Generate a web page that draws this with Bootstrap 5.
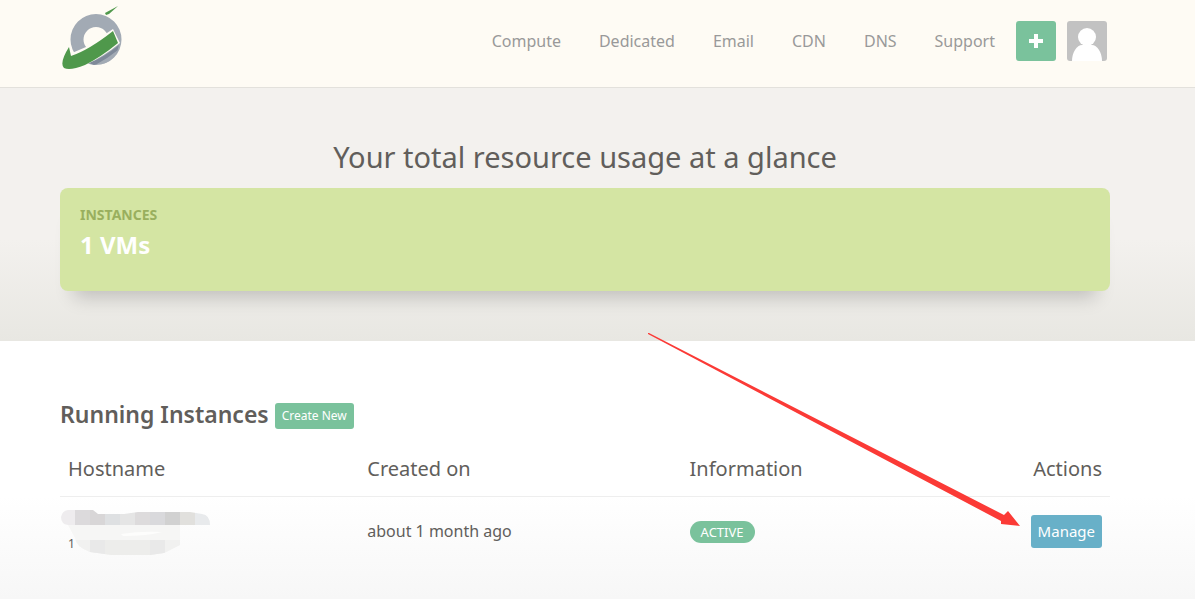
<!DOCTYPE html>
<html lang="en">
<head>
<meta charset="utf-8">
<meta name="viewport" content="width=device-width, initial-scale=1">
<title>Dashboard</title>
<link href="https://cdn.jsdelivr.net/npm/bootstrap@5.3.0/dist/css/bootstrap.min.css" rel="stylesheet">
<style>
body{font-family:"Noto Sans","Open Sans",sans-serif;font-size:16px;color:#615e5b;background:#fff;overflow-x:hidden}
.gutter{padding-left:60px;padding-right:85px}
.topbar{background:#fefbf4;border-bottom:1px solid #e3e1dc;min-height:88px;padding-top:0;padding-bottom:5px}
.topbar .nav-link{color:#999;padding:0 19px;line-height:24px}
.btn-mint{background:#7ac29c;color:#fff;border:0;border-radius:3px}
.btn-mint:hover{background:#68b48c;color:#fff}
.square{width:40px;height:40px}
.add{margin:0 11px 0 2px}
.avatar{border-radius:3px;overflow:hidden;margin-right:3px}
.hero{background:linear-gradient(#f3f1ee 60%,#e8e7e2);padding-top:49px;padding-bottom:50px}
.hero h1{font-size:29px;line-height:40px;margin-bottom:11px;font-weight:400}
.usage{background:#d4e5a3;border-radius:8px;padding:17px 20px;min-height:103px;box-shadow:0 20px 18px -14px rgba(0,0,0,.2)}
.usage-label{color:#99af5e;font-size:14px;line-height:20px;font-weight:700}
.usage-value{color:#fff;font-size:24px;line-height:40px;font-weight:700}
.instances{min-height:258px;padding-top:56px;background:linear-gradient(#fff 60%,#f7f7f7)}
.instances h2{font-size:23px;line-height:34px;font-weight:600}
.heading-row{gap:6px}
.create{font-size:12px;line-height:18px;padding:4px 7px;margin-top:4px}
.grid-table{--bs-table-bg:transparent;--bs-table-color:#615e5b;table-layout:fixed;margin-top:15px}
.grid-table th{font-size:20px;line-height:30px;font-weight:400;padding:8px 8px 12px;border-bottom:1px solid #eee}
.grid-table td{padding:8px;border:0;height:68px;vertical-align:middle}
.w-host{width:28.5%}.w-created{width:30.7%}.w-info{width:32.4%}
.state{background:#7ac29c;border-radius:11px;font-size:13px;line-height:14px;font-weight:400;padding:4px 11px;vertical-align:middle}
.manage{background:#68b0c8;color:#fff;border:0;border-radius:3px;font-size:15px;line-height:21px;padding:6px 7px}
.manage:hover{background:#559fb8;color:#fff}
.pointer{right:100%;bottom:20px;margin-right:10px;pointer-events:none}
.host{height:52px}
.host svg{left:-8px;top:0}
.host-ip{font-size:12px;line-height:16px;bottom:5px;left:0}
</style>
</head>
<body>
<header class="topbar gutter d-flex align-items-center justify-content-between">
  <a href="#" aria-label="Home">
    <svg class="d-block" width="64" height="82" viewBox="0 0 64 82" aria-hidden="true">
      <path fill="#a2aab4" fill-rule="evenodd" d="M36 14a25.500 25.500 0 1 1 0 51 25.500 25.500 0 1 1 0-51zm0 13a12.500 12.500 0 1 0 0 25 12.500 12.500 0 1 0 0-25z"/>
      <path fill="#7f8999" d="M29 63Q43 58 59 45L57 52Q47 62 34 65Z"/>
      <path fill="#a2aab4" d="M37 64Q48 58 58 50Q51 65 37 64Z"/>
      <path fill="#fefbf4" d="M8 45L11 46L12 53L26 47L53 29L60 43Q43 57 27 64L0 70Z"/>
      <path fill="#4f984b" d="M9 47L11 56Q29 50 53 31L58 43Q41 57 25 65Q10 71 4 68Q-1 63 9 47Z"/>
      <path fill="#4f984b" d="M45 13L58 6L49 14L46 15Z"/>
    </svg>
  </a>
  <nav class="d-flex align-items-center" aria-label="Main">
    <a class="nav-link" href="#">Compute</a><a class="nav-link" href="#">Dedicated</a><a class="nav-link" href="#">Email</a><a class="nav-link" href="#">CDN</a><a class="nav-link" href="#">DNS</a><a class="nav-link" href="#">Support</a>
    <button class="btn btn-mint square add p-0 d-flex align-items-center justify-content-center" type="button" aria-label="Add">
      <svg width="14" height="14" viewBox="0 0 14 14"><path fill="#fff" d="M5 0h4v5h5v4H9v5H5V9H0V5h5z"/></svg>
    </button>
    <a class="avatar square d-block" href="#" aria-label="Account">
      <svg class="d-block" width="40" height="40" viewBox="0 0 40 40"><path fill="#c2c2c2" d="M0 0h40v40H0z"/><circle cx="20" cy="16" r="9" fill="#fff"/><path fill="#fff" d="M5 40c0-9 5-16 10-16h10c5 0 10 7 10 16z"/></svg>
    </a>
  </nav>
</header>
<main>
  <section class="hero gutter">
    <h1 class="text-center">Your total resource usage at a glance</h1>
    <div class="usage">
      <div class="usage-label">INSTANCES</div>
      <div class="usage-value">1 VMs</div>
    </div>
  </section>
  <section class="instances gutter">
    <div class="heading-row d-flex align-items-center">
      <h2 class="mb-0">Running Instances</h2>
      <button class="btn btn-mint create" type="button">Create New</button>
    </div>
    <table class="table grid-table mb-0">
      <thead><tr><th class="w-host" scope="col">Hostname</th><th class="w-created" scope="col">Created on</th><th class="w-info" scope="col">Information</th><th class="text-end" scope="col">Actions</th></tr></thead>
      <tbody><tr>
        <td>
          <div class="host position-relative">
            <svg class="position-absolute" width="152" height="52" viewBox="0 0 152 52" aria-hidden="true">
              <defs>
                <clipPath id="nameShape"><path d="M8 5H33L38 9H64L78 7H130L142 9Q150 10 150 20H8Q1 19 1 12Q2 6 8 5Z"/></clipPath>
                <clipPath id="ipShape"><path d="M8 20H120V40Q110 45 104 48L90 50H52L30 47Q16 42 15 33Z"/></clipPath>
              </defs>
              <g clip-path="url(#nameShape)">
                <path fill="#eeecee" d="M0 0h15v20H0z"/><path fill="#dcdadc" d="M15 0h15v20H15z"/><path fill="#d8d6d7" d="M30 0h15v20H30z"/><path fill="#dee0e2" d="M45 0h15v20H45z"/><path fill="#e5e5e5" d="M60 0h15v20H60z"/><path fill="#dddbdc" d="M75 0h15v20H75z"/><path fill="#d9d9dc" d="M90 0h15v20H90z"/><path fill="#d1d1d1" d="M105 0h15v20h-15z"/><path fill="#e1e0dd" d="M120 0h15v20h-15z"/><path fill="#e8eaec" d="M135 0h15v20h-15z"/>
              </g>
              <g clip-path="url(#ipShape)">
                <path fill="#f6f6f5" d="M0 20h120v32H0z"/><path fill="#f1f1f0" d="M15 35h105v17H15z"/><path fill="#e9e9e9" d="M30 35h15v17H30zM90 35h15v17H90z"/><path fill="#ededeb" d="M45 35h45v17H45z"/>
                <path fill="#fdfdfc" d="M61 29Q80 26 102 27Q88 31 63 31Z"/>
              </g>
            </svg>
            <span class="host-ip position-absolute">1</span>
          </div>
        </td>
        <td>about 1 month ago</td>
        <td><span class="badge state">ACTIVE</span></td>
        <td class="text-end">
          <div class="position-relative d-inline-block">
            <button class="btn manage" type="button">Manage</button>
            <svg class="pointer position-absolute" width="374" height="196" viewBox="0 0 374 196" aria-hidden="true"><path fill="#fb3a36" d="M1 1L2 1L357 183L361 179L373 194L354 192L354 189L1 2Z"/></svg>
          </div>
        </td>
      </tr></tbody>
    </table>
  </section>
</main>
<script src="https://cdn.jsdelivr.net/npm/bootstrap@5.3.0/dist/js/bootstrap.bundle.min.js"></script>
</body>
</html>
